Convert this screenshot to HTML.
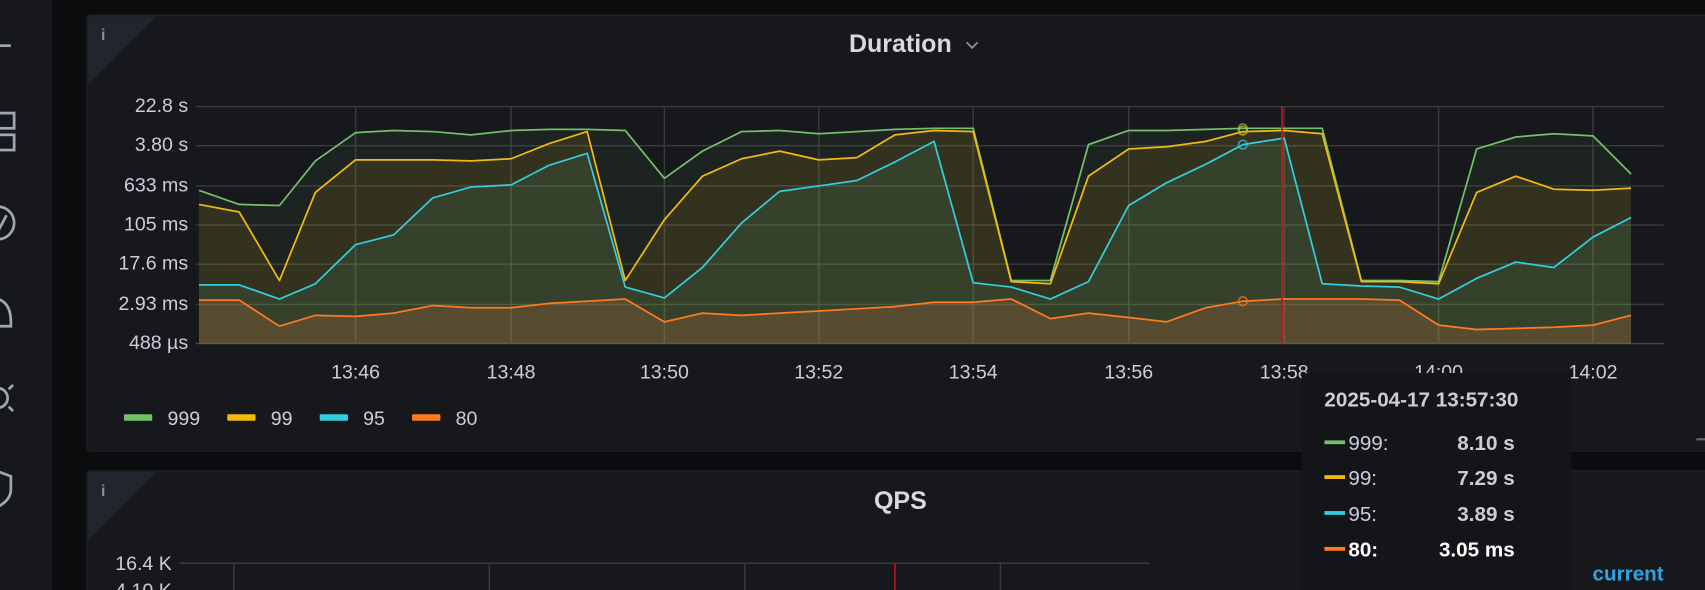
<!DOCTYPE html>
<html><head><meta charset="utf-8"><style>
html,body{margin:0;padding:0;background:#0b0c0e;overflow:hidden}
svg{display:block}
text{font-family:"Liberation Sans",sans-serif}
</style></head><body>
<svg width="1705" height="590" viewBox="0 0 1568 542.6" preserveAspectRatio="none">
<rect width="1568" height="543" fill="#0b0c0e"/>
<rect x="0" y="0" width="48" height="543" fill="#17181c"/>
<g stroke="#9fa7b3" stroke-width="2.5" fill="none">
<line x1="0" y1="42" x2="10" y2="42"/>
<rect x="-4" y="104" width="17" height="14"/><rect x="-4" y="124" width="17" height="14"/>
<circle cx="-2" cy="205" r="15"/><path d="M-2 213 L6 198"/>
<path d="M-6 300 L10 300 L10 296 Q10 276 -6 274"/>
<circle cx="-2" cy="366" r="9"/><path d="M8 358 l4 -4 M8 374 l4 4 M-2 352 l0 -4 M-2 380 l0 4"/>
<path d="M-6 432 L10 438 L10 450 Q10 460 -2 466"/>
</g>
<rect x="80" y="14" width="1500" height="401" rx="3" fill="#17181c" stroke="#202226"/>
<polygon points="81,15 144,15 81,78" fill="#22252b"/>
<text x="93" y="37" fill="#8e939b" font-size="14" font-weight="bold" font-family="Liberation Serif">i</text>
<text x="828" y="48" fill="#d8d9da" font-size="23" font-weight="bold" text-anchor="middle">Duration</text>
<path d="M889 39 l5 5 l5 -5" stroke="#8e939b" stroke-width="1.6" fill="none"/>
<g fill="#ccccdc" font-size="18" text-anchor="end">
<text x="173" y="103">22.8 s</text><text x="173" y="139">3.80 s</text><text x="173" y="176">633 ms</text><text x="173" y="212">105 ms</text><text x="173" y="248">17.6 ms</text><text x="173" y="285">2.93 ms</text><text x="173" y="321">488 µs</text>
</g>
<g stroke="#3a3b3f" stroke-width="1.3">
<line x1="180" y1="98" x2="1530" y2="98"/><line x1="180" y1="134" x2="1530" y2="134"/><line x1="180" y1="171" x2="1530" y2="171"/><line x1="180" y1="207" x2="1530" y2="207"/><line x1="180" y1="243" x2="1530" y2="243"/><line x1="180" y1="280" x2="1530" y2="280"/><line x1="180" y1="316" x2="1530" y2="316" stroke="#45464a"/>
<line x1="327" y1="98" x2="327" y2="316"/><line x1="470" y1="98" x2="470" y2="316"/><line x1="611" y1="98" x2="611" y2="316"/><line x1="753" y1="98" x2="753" y2="316"/><line x1="895" y1="98" x2="895" y2="316"/><line x1="1038" y1="98" x2="1038" y2="316"/><line x1="1181" y1="98" x2="1181" y2="316"/><line x1="1323" y1="98" x2="1323" y2="316"/><line x1="1465" y1="98" x2="1465" y2="316"/>
</g>
<g stroke-width="1.6" stroke-linejoin="round">
<polygon fill="#73bf69" fill-opacity="0.07" stroke="none" points="183,316 183,175 220,188 257,189 290,148 327,122 362,120 398,121 433,124 470,120 505,119 540,119 575,120 611,164 646,139 682,121 717,120 753,123 788,121 823,119 859,118 895,118 930,258 966,258 1001,133 1038,120 1073,120 1109,119 1143,118 1181,118 1216,118 1252,258 1287,258 1323,259 1358,137 1394,126 1429,123 1465,125 1500,160 1500,316"/>
<polygon fill="#f2b90f" fill-opacity="0.1" stroke="none" points="183,316 183,188 220,195 257,258 290,177 327,147 362,147 398,147 433,148 470,146 505,132 540,121 575,258 611,202 646,162 682,146 717,139 753,147 788,145 823,124 859,120 895,121 930,259 966,261 1001,162 1038,137 1073,135 1109,130 1143,121 1181,120 1216,123 1252,259 1287,259 1323,261 1358,177 1394,162 1429,174 1465,175 1500,173 1500,316"/>
<polygon fill="#4ecf9f" fill-opacity="0.1" stroke="none" points="183,316 183,262 220,262 257,275 290,261 327,225 362,216 398,182 433,172 470,170 505,152 540,141 575,264 611,274 646,246 682,205 717,176 753,171 788,166 823,149 859,130 895,260 930,264 966,275 1001,259 1038,189 1073,168 1109,151 1143,133 1181,127 1216,261 1252,263 1287,264 1323,275 1358,256 1394,241 1429,246 1465,218 1500,200 1500,316"/>
<polygon fill="#ff7a50" fill-opacity="0.17" stroke="none" points="183,316 183,276 220,276 257,300 290,290 327,291 362,288 398,281 433,283 470,283 505,279 540,277 575,275 611,296 646,288 682,290 717,288 753,286 788,284 823,282 859,278 895,278 930,275 966,293 1001,288 1038,292 1073,296 1109,283 1143,277 1181,275 1216,275 1252,275 1287,276 1323,299 1358,303 1394,302 1429,301 1465,299 1500,290 1500,316"/>
<polyline fill="none" stroke="#73bf69" points="183,175 220,188 257,189 290,148 327,122 362,120 398,121 433,124 470,120 505,119 540,119 575,120 611,164 646,139 682,121 717,120 753,123 788,121 823,119 859,118 895,118 930,258 966,258 1001,133 1038,120 1073,120 1109,119 1143,118 1181,118 1216,118 1252,258 1287,258 1323,259 1358,137 1394,126 1429,123 1465,125 1500,160"/>
<polyline fill="none" stroke="#f2b90f" points="183,188 220,195 257,258 290,177 327,147 362,147 398,147 433,148 470,146 505,132 540,121 575,258 611,202 646,162 682,146 717,139 753,147 788,145 823,124 859,120 895,121 930,259 966,261 1001,162 1038,137 1073,135 1109,130 1143,121 1181,120 1216,123 1252,259 1287,259 1323,261 1358,177 1394,162 1429,174 1465,175 1500,173"/>
<polyline fill="none" stroke="#33cde0" points="183,262 220,262 257,275 290,261 327,225 362,216 398,182 433,172 470,170 505,152 540,141 575,264 611,274 646,246 682,205 717,176 753,171 788,166 823,149 859,130 895,260 930,264 966,275 1001,259 1038,189 1073,168 1109,151 1143,133 1181,127 1216,261 1252,263 1287,264 1323,275 1358,256 1394,241 1429,246 1465,218 1500,200"/>
<polyline fill="none" stroke="#ff7a1e" points="183,276 220,276 257,300 290,290 327,291 362,288 398,281 433,283 470,283 505,279 540,277 575,275 611,296 646,288 682,290 717,288 753,286 788,284 823,282 859,278 895,278 930,275 966,293 1001,288 1038,292 1073,296 1109,283 1143,277 1181,275 1216,275 1252,275 1287,276 1323,299 1358,303 1394,302 1429,301 1465,299 1500,290"/>
</g>
<g fill="none" stroke-width="1.5" stroke-opacity="0.7">
<circle cx="1143" cy="118" r="4" stroke="#73bf69"/><circle cx="1143" cy="120" r="4" stroke="#f2b90f"/><circle cx="1143" cy="133" r="4" stroke="#33cde0"/><circle cx="1143" cy="277" r="4" stroke="#ff7a1e"/>
</g>
<line x1="1179" y1="98" x2="1179" y2="316" stroke="#c4161c" stroke-width="1.6"/>
<g fill="#ccccdc" font-size="18" text-anchor="middle">
<text x="327" y="348">13:46</text><text x="470" y="348">13:48</text><text x="611" y="348">13:50</text><text x="753" y="348">13:52</text><text x="895" y="348">13:54</text><text x="1038" y="348">13:56</text><text x="1181" y="348">13:58</text><text x="1323" y="348">14:00</text><text x="1465" y="348">14:02</text>
</g>
<g font-size="18" fill="#ccccdc">
<rect x="114" y="381" width="26" height="6" rx="1" fill="#73bf69"/><text x="154" y="391">999</text>
<rect x="209" y="381" width="26" height="6" rx="1" fill="#f2b90f"/><text x="249" y="391">99</text>
<rect x="294" y="381" width="26" height="6" rx="1" fill="#33cde0"/><text x="334" y="391">95</text>
<rect x="379" y="381" width="26" height="6" rx="1" fill="#ff7a1e"/><text x="419" y="391">80</text>
</g>
<rect x="1560" y="403" width="8" height="2" fill="#666"/>
<rect x="80" y="433" width="1500" height="120" rx="3" fill="#17181c" stroke="#202226"/>
<polygon points="81,434 144,434 81,497" fill="#22252b"/>
<text x="93" y="456" fill="#8e939b" font-size="14" font-weight="bold" font-family="Liberation Serif">i</text>
<text x="828" y="468" fill="#d8d9da" font-size="23" font-weight="bold" text-anchor="middle">QPS</text>
<text x="158" y="524" fill="#ccccdc" font-size="18" text-anchor="end">16.4 K</text>
<text x="158" y="549" fill="#ccccdc" font-size="18" text-anchor="end">4.10 K</text>
<g stroke="#3a3b3f" stroke-width="1.3">
<line x1="165" y1="518" x2="1057" y2="518"/>
<line x1="215" y1="518" x2="215" y2="543"/><line x1="450" y1="518" x2="450" y2="543"/><line x1="685" y1="518" x2="685" y2="543"/><line x1="920" y1="518" x2="920" y2="543"/>
</g>
<line x1="823" y1="518" x2="823" y2="543" stroke="#c4161c" stroke-width="1.4"/>
<text x="1530" y="534" fill="#33a2e5" font-size="19" font-weight="bold" text-anchor="end">current</text>
<rect x="1197" y="343" width="248" height="201" fill="#141518"/>
<text x="1218" y="374" fill="#ccccdc" font-size="19" font-weight="bold">2025-04-17 13:57:30</text>
<g font-size="19">
<rect x="1218" y="405" width="19" height="3.5" fill="#73bf69"/><text x="1240" y="414" fill="#ccccdc">999:</text><text x="1393" y="414" fill="#ccccdc" font-weight="bold" text-anchor="end">8.10 s</text>
<rect x="1218" y="437" width="19" height="3.5" fill="#f2b90f"/><text x="1240" y="446" fill="#ccccdc">99:</text><text x="1393" y="446" fill="#ccccdc" font-weight="bold" text-anchor="end">7.29 s</text>
<rect x="1218" y="470" width="19" height="3.5" fill="#33cde0"/><text x="1240" y="479" fill="#ccccdc">95:</text><text x="1393" y="479" fill="#ccccdc" font-weight="bold" text-anchor="end">3.89 s</text>
<rect x="1218" y="503" width="19" height="3.5" fill="#ff7a1e"/><text x="1240" y="512" fill="#ffffff" font-weight="bold">80:</text><text x="1393" y="512" fill="#ffffff" font-weight="bold" text-anchor="end">3.05 ms</text>
</g>
</svg>
</body></html>
